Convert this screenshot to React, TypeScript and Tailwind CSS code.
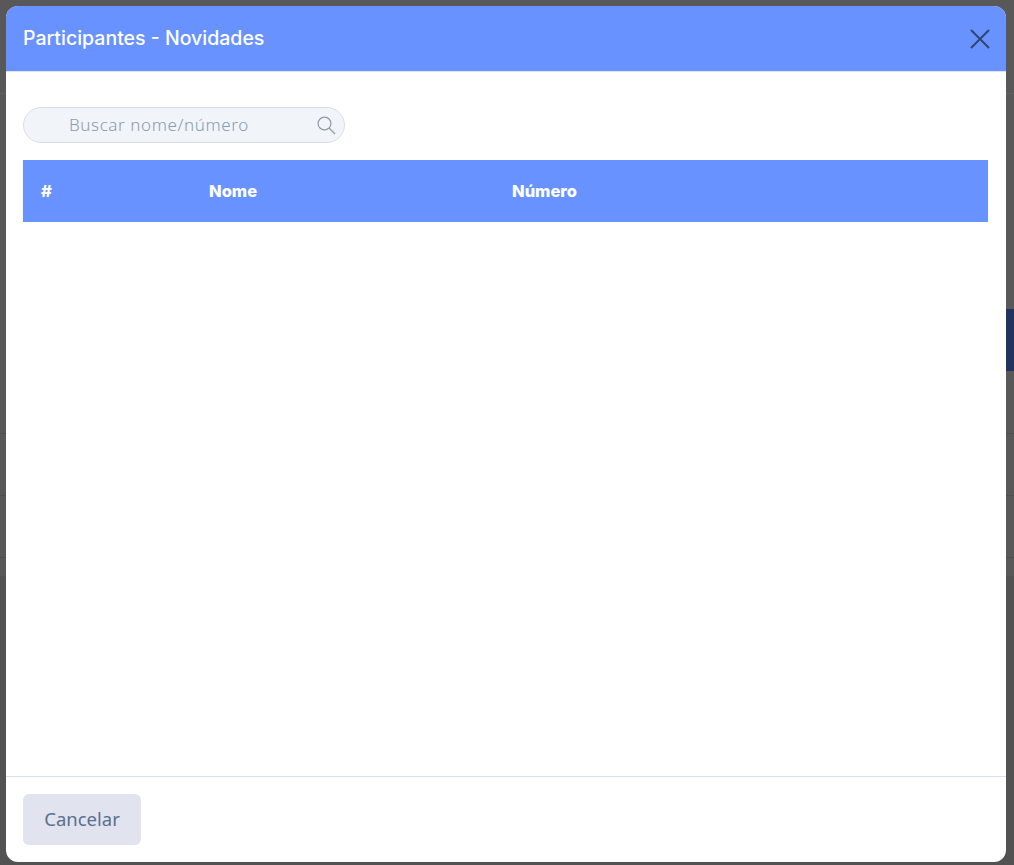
export default function App() {
  return (
    <div className="relative h-[865px] w-[1014px] overflow-hidden bg-[#585858] font-['Noto_Sans',sans-serif]">
      {/* dimmed page behind the dialog */}
      <div className="flex h-full flex-col">
        <div className="h-[94px] border-b border-[#606060]" />
        <div className="h-[215px]" />
        <div className="ml-auto h-[62px] w-[8px] bg-[#23335f]" />
        <div className="h-[63px] border-b border-[#4f4f4f]" />
        <div className="h-[62px] border-b border-[#4f4f4f]" />
        <div className="h-[62px] border-b border-[#4f4f4f]" />
        <div className="h-[18px]" />
        <div className="flex-1 bg-[#525252]" />
      </div>

      {/* dialog */}
      <div className="absolute left-[6px] top-[6px] flex h-[856px] w-[1000px] flex-col overflow-hidden rounded-[12px] bg-white">
        <header className="flex h-[66px] items-center justify-between border-b border-[#dbe5ff] bg-[#6892ff] pl-[17px] pr-[8px]">
          <h2 className="font-['Inter',sans-serif] text-[19.5px] font-medium text-white">Participantes - Novidades</h2>
          <svg viewBox="0 0 36 36" className="h-[36px] w-[36px] text-[#2f4674]" fill="none" stroke="currentColor" strokeWidth={2}>
            <path d="M9 9 L27 27 M27 9 L9 27" />
          </svg>
        </header>

        <main className="flex flex-1 flex-col px-[17px] pt-[35px]">
          <div className="flex h-[36px] w-[322px] items-center justify-between rounded-full border border-[#d7dfe9] bg-[#f1f4f9] pl-[45px] pr-[8px]">
            <span className="text-[17px] font-light tracking-[0.6px] text-[#8a9bb0]">Buscar nome/número</span>
            <svg viewBox="0 0 19 19" className="h-[19px] w-[19px] text-[#8f9aa8]" fill="none" stroke="currentColor" strokeWidth={1.2}>
              <circle cx="7.5" cy="7.5" r="6.4" />
              <path d="M12 12 L18 18" />
            </svg>
          </div>

          <div className="mt-[17px] flex h-[62px] w-[965px] items-center bg-[#6892ff] font-['Inter',sans-serif] text-[16.5px] font-extrabold text-white">
            <span className="ml-[18px] w-[168px]">#</span>
            <span className="w-[303px]">Nome</span>
            <span>Número</span>
          </div>
        </main>

        <footer className="flex h-[86px] items-start border-t border-[#d5e1ec] px-[17px] pt-[17px]">
          <button className="flex h-[51px] w-[118px] items-center justify-center rounded-[6px] bg-[#e1e4ee] pb-[2px] text-[18.5px] text-[#5b7090]">
            Cancelar
          </button>
        </footer>
      </div>
    </div>
  );
}
